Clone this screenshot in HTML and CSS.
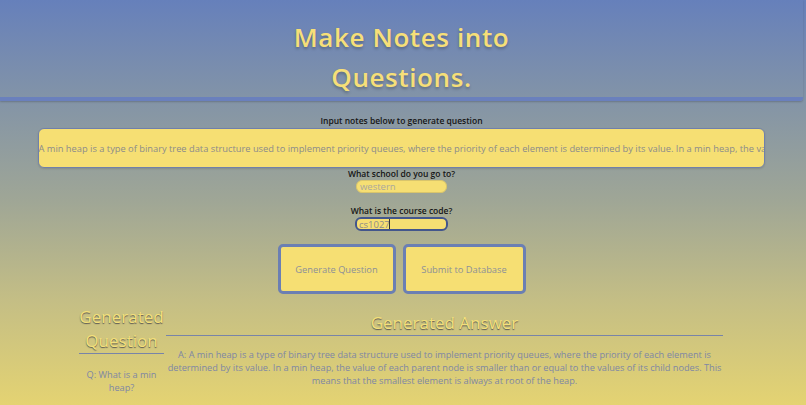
FILE: index.html
```html
<!DOCTYPE html>
<html lang="en">
<head>
<meta charset="utf-8">
<title>Make Notes into Questions</title>
<link rel="stylesheet" href="styles.css">
</head>
<body>
<div class="page">
  <header class="hero">
    <h1 class="hero-title">Make Notes into<br>Questions.</h1>
  </header>
  <main class="form">
    <label class="label" for="notes">Input notes below to generate question</label>
    <input id="notes" class="notes" type="text" value="A min heap is a type of binary tree data structure used to implement priority queues, where the priority of each element is determined by its value. In a min heap, the value of each parent node is smaller than or equal to the values of its child nodes.">
    <label class="label" for="school">What school do you go to?</label>
    <input id="school" class="small-input" type="text" value="western">
    <label class="label label-gap" for="course">What is the course code?</label>
    <span class="caret-wrap"><input id="course" class="small-input is-focused" type="text" value="cs1027"><span class="caret"></span></span>
    <div class="actions">
      <button class="btn btn-generate" type="button">Generate Question</button>
      <button class="btn btn-submit" type="button">Submit to Database</button>
    </div>
  </main>
  <section class="results">
    <div class="col-question">
      <h2 class="res-title res-title-q">Generated Question</h2>
      <p class="res-text res-text-q">Q: What is a min heap?</p>
    </div>
    <div class="col-answer">
      <h2 class="res-title res-title-a">Generated Answer</h2>
      <p class="res-text res-text-a">A: A min heap is a type of binary tree data structure used to implement priority queues, where the priority of each element is determined by its value. In a min heap, the value of each parent node is smaller than or equal to the values of its child nodes. This means that the smallest element is always at root of the heap.</p>
    </div>
  </section>
</div>
</body>
</html>
```
FILE: styles.css
```css
* { box-sizing: border-box; }
html, body {
  margin: 0;
  padding: 0;
}
body {
  min-height: 405px;
  overflow: hidden;
  font-family: "Open Sans", "Liberation Sans", sans-serif;
  background: linear-gradient(to bottom, #6680bb 0px, #8394a7 100px, #9fa696 200px, #c4be85 300px, #e4d372 405px);
}
.page {
  width: 806px;
}
.hero {
  width: 803px;
  height: 101px;
  border-bottom: 4px solid #6a80bd;
  border-bottom-right-radius: 3px;
  box-shadow: 0 1px 2px rgba(0, 0, 0, 0.2);
}
.hero-title {
  margin: 0;
  padding-top: 17px;
  font-size: 26px;
  line-height: 40px;
  font-weight: 600;
  letter-spacing: 0.6px;
  color: #f6df78;
  text-align: center;
  text-shadow: 0 2px 3px rgba(0, 0, 0, 0.25);
}
.form {
  width: 803px;
  display: flex;
  flex-direction: column;
  align-items: center;
  padding-top: 14px;
}
.label {
  font-size: 8.5px;
  line-height: 12px;
  font-weight: 600;
  color: #151515;
}
.label-gap { margin-top: 12px; }
.notes {
  display: block;
  width: 727px;
  height: 40px;
  margin-top: 1px;
  margin-right: 1px;
  padding: 0;
  border: 1px solid #7080ab;
  border-radius: 6px;
  background: #f6df73;
  font-family: inherit;
  font-size: 9.3px;
  color: #8b8b8b;
  outline: none;
  box-shadow: 0 1px 2px rgba(0, 0, 0, 0.12);
}
.small-input {
  display: block;
  width: 91px;
  height: 13px;
  padding: 0 3px;
  border: 1px solid #d9c56c;
  border-radius: 6px;
  background: #f6df73;
  font-family: inherit;
  font-size: 9.5px;
  color: #aaa89e;
  outline: none;
}
.caret-wrap {
  position: relative;
  display: block;
}
.small-input.is-focused {
  width: 93px;
  height: 14px;
  padding: 0 2px;
  border: 2px solid #43568c;
  color: #8d8c88;
}
.caret {
  position: absolute;
  left: 34px;
  top: 2px;
  width: 1px;
  height: 10px;
  background: #333;
}
.actions {
  display: flex;
  gap: 7px;
  margin-top: 13px;
}
.btn {
  height: 50px;
  border: 3px solid #6b7fb3;
  border-radius: 5px;
  background: #f6df73;
  font-family: inherit;
  font-size: 9.3px;
  color: #8c8f98;
  padding: 0;
}
.btn-generate { width: 118px; }
.btn-submit { width: 123px; }
.results {
  width: 646px;
  margin: 10px 0 0 78px;
  display: flex;
}
.col-question {
  width: 87px;
  flex: none;
}
.col-answer {
  flex: 1;
}
.res-title {
  margin: 0;
  font-size: 17px;
  line-height: 24px;
  font-weight: 400;
  color: #f4e07a;
  text-align: center;
  text-shadow: 0 1px 1px rgba(60, 60, 70, 0.8);
  border-bottom: 1px solid #7884a8;
}
.res-title-q {
  margin: 1px 1px 0;
}
.res-title-a {
  margin: 7px 1px 0;
}
.res-text {
  margin: 0;
  font-size: 9.2px;
  line-height: 13px;
  color: #7e87a4;
  text-align: center;
}
.res-text-q { margin-top: 14px; }
.res-text-a { margin-top: 12px; }
```
